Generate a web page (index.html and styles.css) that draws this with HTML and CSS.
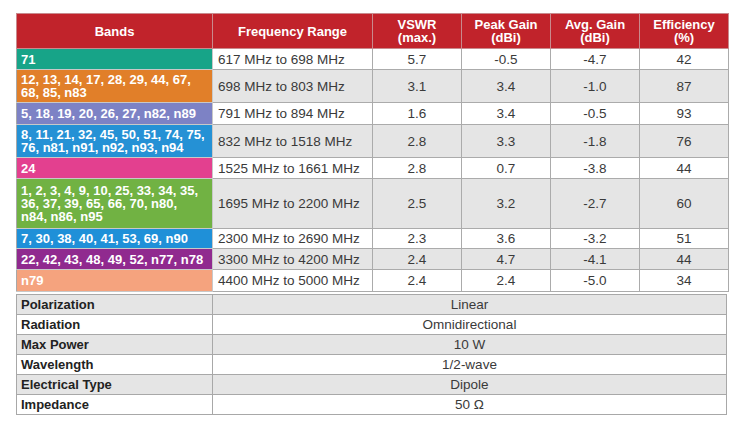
FILE: index.html
```html
<!DOCTYPE html>
<html lang="en">
<head>
<meta charset="utf-8">
<title>Antenna Specifications</title>
<link rel="stylesheet" href="styles.css">
</head>
<body>
<div class="wrap">
<table class="spec">
  <colgroup>
    <col class="c-band"><col class="c-freq"><col class="c-num"><col class="c-num"><col class="c-num"><col class="c-num">
  </colgroup>
  <thead>
    <tr class="h-head">
      <th>Bands</th>
      <th>Frequency Range</th>
      <th>VSWR<br>(max.)</th>
      <th>Peak Gain<br>(dBi)</th>
      <th>Avg. Gain<br>(dBi)</th>
      <th>Efficiency<br>(%)</th>
    </tr>
  </thead>
  <tbody>
    <tr class="h1 odd"><td class="band teal">71</td><td class="freq">617 MHz to 698 MHz</td><td>5.7</td><td>-0.5</td><td>-4.7</td><td>42</td></tr>
    <tr class="h2 even"><td class="band orange">12, 13, 14, 17, 28, 29, 44, 67,<br>68, 85, n83</td><td class="freq">698 MHz to 803 MHz</td><td>3.1</td><td>3.4</td><td>-1.0</td><td>87</td></tr>
    <tr class="h1b odd"><td class="band lavender">5, 18, 19, 20, 26, 27, n82, n89</td><td class="freq">791 MHz to 894 MHz</td><td>1.6</td><td>3.4</td><td>-0.5</td><td>93</td></tr>
    <tr class="h2 even"><td class="band blue">8, 11, 21, 32, 45, 50, 51, 74, 75,<br>76, n81, n91, n92, n93, n94</td><td class="freq">832 MHz to 1518 MHz</td><td>2.8</td><td>3.3</td><td>-1.8</td><td>76</td></tr>
    <tr class="h1 odd"><td class="band pink">24</td><td class="freq">1525 MHz to 1661 MHz</td><td>2.8</td><td>0.7</td><td>-3.8</td><td>44</td></tr>
    <tr class="h3 even"><td class="band green">1, 2, 3, 4, 9, 10, 25, 33, 34, 35,<br>36, 37, 39, 65, 66, 70, n80,<br>n84, n86, n95</td><td class="freq">1695 MHz to 2200 MHz</td><td>2.5</td><td>3.2</td><td>-2.7</td><td>60</td></tr>
    <tr class="h1s odd"><td class="band sky">7, 30, 38, 40, 41, 53, 69, n90</td><td class="freq">2300 MHz to 2690 MHz</td><td>2.3</td><td>3.6</td><td>-3.2</td><td>51</td></tr>
    <tr class="h1 even"><td class="band purple">22, 42, 43, 48, 49, 52, n77, n78</td><td class="freq">3300 MHz to 4200 MHz</td><td>2.4</td><td>4.7</td><td>-4.1</td><td>44</td></tr>
    <tr class="h1b odd"><td class="band salmon">n79</td><td class="freq">4400 MHz to 5000 MHz</td><td>2.4</td><td>2.4</td><td>-5.0</td><td>34</td></tr>
  </tbody>
</table>

<table class="props">
  <colgroup><col class="c-band"><col></colgroup>
  <tbody>
    <tr class="even"><th>Polarization</th><td>Linear</td></tr>
    <tr class="odd"><th>Radiation</th><td>Omnidirectional</td></tr>
    <tr class="even"><th>Max Power</th><td>10 W</td></tr>
    <tr class="odd"><th>Wavelength</th><td>1/2-wave</td></tr>
    <tr class="even"><th>Electrical Type</th><td>Dipole</td></tr>
    <tr class="odd"><th>Impedance</th><td>50 Ω</td></tr>
  </tbody>
</table>
</div>
</body>
</html>
```

FILE: styles.css
```css
html, body {
  margin: 0;
  padding: 0;
  background: #ffffff;
}

body {
  font-family: "Liberation Sans", Arial, Helvetica, sans-serif;
  color: #333333;
}

.wrap {
  padding: 13px 17px 0 16px;
  display: flex;
  flex-direction: column;
  gap: 2px;
  width: 711px;
}

table {
  border-collapse: collapse;
  width: 711px;
  table-layout: fixed;
}

.c-band { width: 196px; }
.c-freq { width: 160px; }
.c-num { width: 89px; }

.spec {
  border: 1px solid #a8a8a8;
}

.spec th {
  background: #c1232b;
  color: #ffffff;
  font-weight: bold;
  font-size: 13px;
  line-height: 13px;
  text-align: center;
  border: 1px solid #c98a8d;
  padding: 0;
}

.h-head { height: 35px; }
.h1 { height: 21px; }
.h1b { height: 22px; }
.h1s { height: 20px; }
.h2 { height: 33px; }
.h3 { height: 50px; }

.spec td {
  font-size: 13.5px;
  line-height: 13px;
  text-align: center;
  border: 1px solid #ababab;
  padding: 0;
  color: #3a3a3a;
}

.spec td.band {
  text-align: left;
  padding-left: 4px;
  color: #ffffff;
  font-size: 13px;
  font-weight: bold;
  white-space: nowrap;
  border-color: #c8c8c8;
  border-left-color: #a8a8a8;
}

.spec td.freq {
  text-align: left;
  padding-left: 5px;
}

.odd td { background: #ffffff; }
.even td { background: #e5e5e5; }

.spec td.teal { background: #17a488; }
.spec td.orange { background: #e17f29; }
.spec td.lavender { background: #7d82c5; }
.spec td.blue { background: #2591d5; }
.spec td.pink { background: #e3408f; }
.spec td.green { background: #71b243; }
.spec td.sky { background: #1f90d8; }
.spec td.purple { background: #902a8f; }
.spec td.salmon { background: #f5a37e; }

.props {
  border: 1px solid #a8a8a8;
}

.props tr { height: 20px; }

.props th,
.props td {
  border: 1px solid #a8a8a8;
  font-size: 13.5px;
  line-height: 14px;
  padding: 0;
}

.props th {
  text-align: left;
  padding-left: 4px;
  font-size: 13px;
  font-weight: bold;
  color: #222222;
}

.props td {
  text-align: center;
  color: #3a3a3a;
}

.props .even th, .props .even td { background: #e5e5e5; }
.props .odd th, .props .odd td { background: #ffffff; }
```
